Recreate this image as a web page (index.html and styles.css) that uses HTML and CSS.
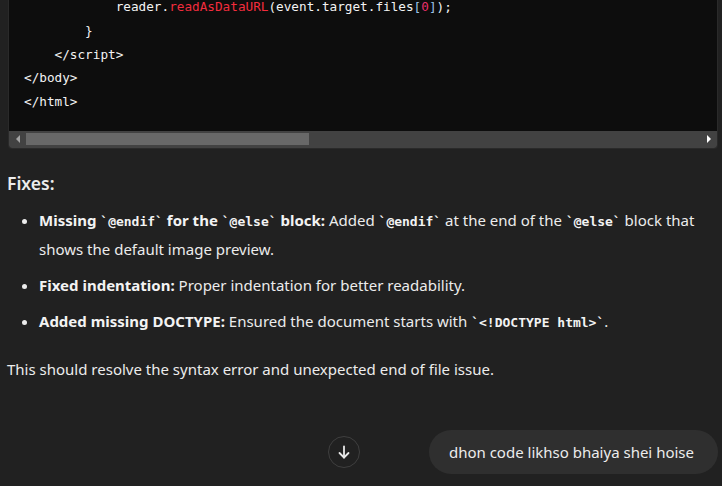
FILE: index.html
```html
<!DOCTYPE html>
<html lang="en">
<head>
<meta charset="utf-8">
<title>Chat</title>
<link rel="stylesheet" href="styles.css">
</head>
<body>
<main class="chat">
  <div class="codeblock">
    <pre class="code"><code class="src"><span class="ln">            reader.<span class="fn">readAsDataURL</span>(event.target.files<span class="br">[</span><span class="num">0</span><span class="br">]</span>);</span><span class="ln">        }</span><span class="ln">    &lt;/script&gt;</span><span class="ln">&lt;/body&gt;</span><span class="ln">&lt;/html&gt;</span></code></pre>
    <div class="hscroll">
      <span class="arrow left"></span>
      <div class="track"><div class="thumb"></div></div>
      <span class="arrow right"></span>
    </div>
  </div>

  <section class="answer">
    <h3 class="title">Fixes:</h3>
    <ul class="fixes">
      <li><strong>Missing <code>`@endif`</code> for the <code>`@else`</code> block:</strong> Added <code>`@endif`</code> at the end of the <code>`@else`</code> block that shows the default image preview.</li>
      <li><strong>Fixed indentation:</strong> Proper indentation for better readability.</li>
      <li><strong>Added missing DOCTYPE:</strong> Ensured the document starts with <code>`&lt;!DOCTYPE html&gt;`</code>.</li>
    </ul>
    <p class="summary">This should resolve the syntax error and unexpected end of file issue.</p>
  </section>

  <div class="composer-row">
    <button class="scroll-down" aria-label="Scroll down">
      <svg width="16" height="16" viewBox="0 0 16 16" fill="none" stroke="#e8e8e8" stroke-width="1.8" stroke-linecap="round" stroke-linejoin="round"><path d="M8 2.5v11"/><path d="M3.5 9l4.5 4.5L12.5 9"/></svg>
    </button>
    <div class="bubble">dhon code likhso bhaiya shei hoise</div>
  </div>
</main>
</body>
</html>
```
FILE: styles.css
```css
html, body {
  margin: 0;
  padding: 0;
  background: #212121;
  height: 100%;
  overflow: hidden;
}
body {
  font-family: "Noto Sans", "Open Sans", sans-serif;
  color: #ececec;
  font-size: 15px;
}
.chat {
  display: flex;
  flex-direction: column;
}
.codeblock {
  margin: -5px 4px 0 8px;
  background: #0d0d0d;
  border: 1px solid #2a2a2a;
  border-top: none;
  border-radius: 0 0 4px 4px;
  overflow: hidden;
}
.code {
  margin: 0;
  padding: 0 16px 17px 15px;
  font-family: "DejaVu Sans Mono", monospace;
  font-size: 12.7px;
  line-height: 23.8px;
  color: #f3f3f3;
}
.code .src {
  font-family: inherit;
  font-size: inherit;
  font-weight: 400;
  color: inherit;
  line-height: inherit;
}
.ln { display: block; white-space: pre; }
.fn { color: #f22c3d; }
.num { color: #e9306b; }
.br { color: #9cc4e8; }
.hscroll {
  display: flex;
  align-items: center;
  height: 17px;
  background: #424242;
}
.arrow {
  width: 17px;
  height: 17px;
  display: flex;
  align-items: center;
  justify-content: center;
}
.arrow.left::before {
  content: "";
  border-right: 4px solid #a3a3a3;
  border-top: 4px solid transparent;
  border-bottom: 4px solid transparent;
}
.arrow.right::before {
  content: "";
  border-left: 4px solid #ffffff;
  border-top: 4px solid transparent;
  border-bottom: 4px solid transparent;
}
.track {
  flex: 1;
  height: 13px;
  display: flex;
  align-items: center;
}
.thumb {
  width: 283px;
  height: 12px;
  background: #686868;
}
.answer {
  padding: 0 7px;
}
.title {
  margin: 21px 0 0 0;
  font-size: 17.5px;
  font-weight: 600;
  line-height: 26px;
  color: #ececec;
}
.fixes {
  margin: 10px 0 0 0;
  padding: 0 0 0 32px;
  line-height: 29px;
}
.fixes li {
  margin-bottom: 7px;
}
.fixes li::marker { color: #ececec; }
strong { font-weight: 700; color: #f3f3f3; }
code {
  font-family: "DejaVu Sans Mono", monospace;
  font-size: 13px;
  font-weight: 700;
  line-height: 1;
  color: #f3f3f3;
}
.summary {
  margin: 19px 0 0 0;
  line-height: 29px;
}
.composer-row {
  display: flex;
  align-items: center;
  justify-content: flex-end;
  margin-top: 46px;
  padding-right: 4px;
  gap: 69px;
}
.scroll-down {
  width: 32px;
  height: 32px;
  border-radius: 50%;
  background: #212121;
  border: 1px solid #3f3f3f;
  display: flex;
  align-items: center;
  justify-content: center;
  padding: 0;
}
.bubble {
  background: #2f2f2f;
  border-radius: 22px;
  height: 44px;
  padding: 0 24px 0 20px;
  display: flex;
  align-items: center;
  font-size: 15px;
  color: #ececec;
}
```
